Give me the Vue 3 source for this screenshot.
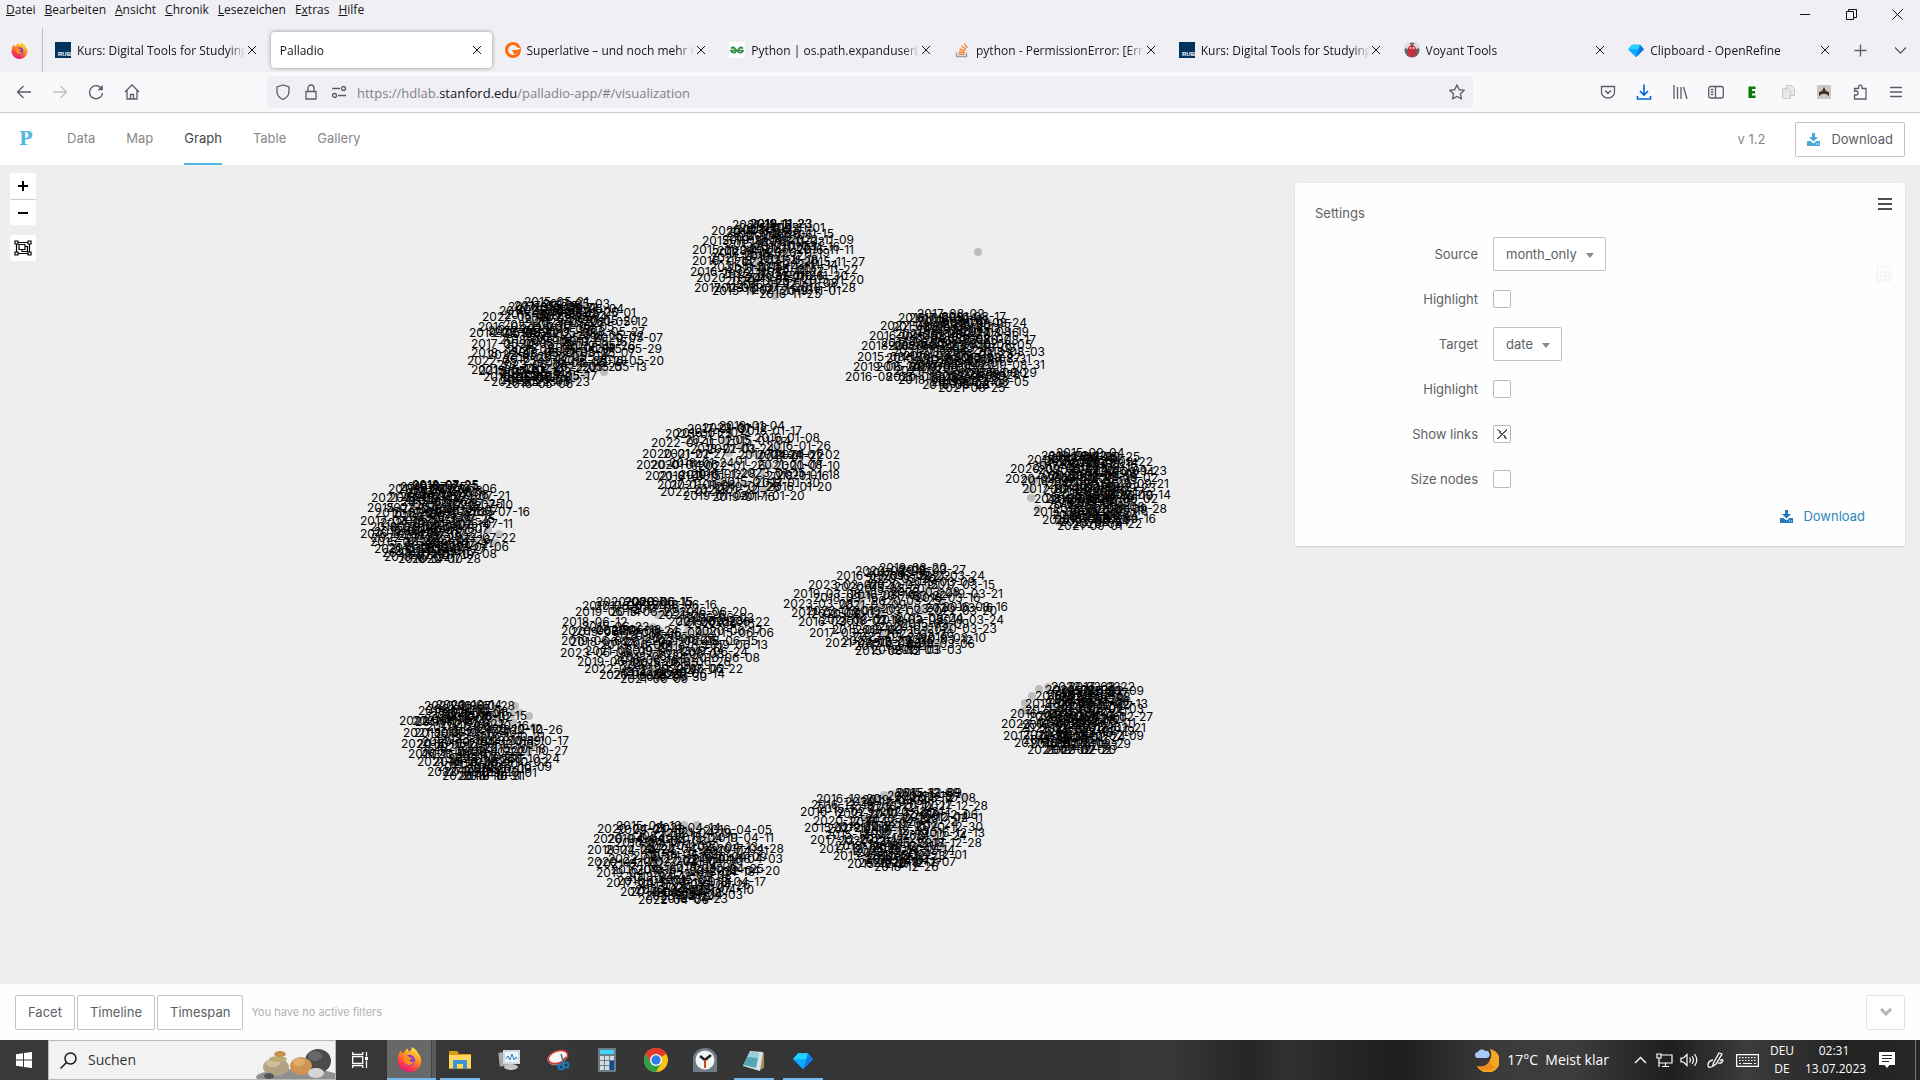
<script setup>
import { ref } from 'vue'

const menus = [
  ['', 'D', 'atei'], ['', 'B', 'earbeiten'], ['', 'A', 'nsicht'], ['', 'C', 'hronik'],
  ['', 'L', 'esezeichen'], ['E', 'x', 'tras'], ['', 'H', 'ilfe'],
]
const tabs = [
  { icon: 'rub', title: 'Kurs: Digital Tools for Studying Film' },
  { icon: '', title: 'Palladio', active: true },
  { icon: 'gg', title: 'Superlative – und noch mehr CSS-Tricks' },
  { icon: 'gfg', title: 'Python | os.path.expanduser() method' },
  { icon: 'so', title: 'python - PermissionError: [Errno 13]' },
  { icon: 'rub', title: 'Kurs: Digital Tools for Studying Film' },
  { icon: 'voyant', title: 'Voyant Tools' },
  { icon: 'gem', title: 'Clipboard - OpenRefine' },
]
const views = ['Data', 'Map', 'Graph', 'Table', 'Gallery']
const source = ref('month_only')
const target = ref('date')
const opts = ref({ hs: false, ht: false, links: true, size: false })

// Each month: labels anchored at their start (l) or end (r) as "x y day-label", and bare nodes (n).
const months = [
  { m: '05', k: 40,
    l: '524 302 2015-21|508 307 2017-03|499 311 2019-14|482 317 2022-18|478 327 2016-11|469 333 2019-26|493 333 2015-22|471 344 2017-09|471 353 2018-17|467 361 2022-25|471 370 2021-12|483 377 2016-02|491 382 2019-15|505 384 2016-06',
    r: '610 304 2017-03|624 309 2019-04|636 313 2022-01|648 322 2021-12|645 332 2018-27|663 338 2020-07|627 342 2019-16|662 349 2015-29|635 353 2018-07|664 361 2016-20|647 367 2015-13|597 376 2018-17|590 382 2022-23',
    n: '601 368|604 372|585 375' },
  { m: '07', k: 36,
    l: '400 487 2019-25|412 485 2018-25|388 489 2017-02|371 498 2021-09|367 508 2015-15|375 513 2016-28|360 521 2017-19|370 527 2018-04|360 534 2016-14|370 542 2015-24|374 549 2021-05|384 557 2018-22|398 559 2016-10',
    r: '479 486 2018-25|497 489 2017-06|510 496 2019-21|513 505 2020-10|530 512 2015-16|513 524 2016-11|489 529 2019-07|516 538 2022-22|509 547 2021-06|497 554 2017-08|481 559 2020-28',
    n: '481 492|486 498|491 506|488 530|499 534|496 543' },
  { m: '11', k: 28,
    l: '732 225 2021-12|750 224 2018-23|711 231 2020-05|702 241 2015-18|692 250 2015-04|712 253 2018-11|692 261 2016-13|710 267 2021-07|690 272 2016-02|696 278 2020-24|694 288 2017-08|712 291 2015-17|759 294 2016-25',
    r: '812 224 2019-23|825 228 2019-01|834 234 2020-15|854 240 2022-09|840 247 2021-16|854 250 2016-11|865 262 2015-27|858 270 2017-22|848 276 2018-30|864 280 2015-20|856 288 2018-28|841 291 2019-01',
    n: '775 296|757 256|806 266|752 281' },
  { m: '08', k: 36,
    l: '917 314 2017-02|898 318 2016-15|880 326 2022-11|869 336 2016-05|895 334 2021-28|861 346 2018-14|888 346 2018-22|857 357 2015-12|886 358 2016-18|853 367 2019-20|910 367 2019-13|935 376 2022-09|845 377 2016-03|922 385 2016-23|938 388 2021-25',
    r: '1006 317 2021-17|1027 323 2019-24|1029 332 2022-19|1036 340 2020-17|1032 345 2020-05|1045 352 2018-03|1031 359 2017-31|1045 365 2019-31|1037 373 2018-29|1029 382 2022-05',
    n: '918 376|932 376|931 384|915 357|928 361|913 366' },
  { m: '01', k: 8,
    l: '719 426 2019-04|702 428 2023-12|687 429 2017-07|665 434 2023-25|685 440 2021-05|651 443 2022-11|690 449 2018-03|642 454 2020-22|663 454 2021-27|738 455 2017-24|636 465 2020-14|650 465 2020-06|669 463 2018-24|757 465 2021-08|645 476 2021-23|658 476 2018-15|679 475 2019-12|740 473 2023-15|766 476 2018-16|657 485 2017-11|670 485 2021-08|660 492 2022-14|715 487 2019-28|683 496 2019-05|712 497 2019-16|740 496 2017-20',
    r: '802 431 2018-17|820 438 2016-08|831 446 2016-26|840 455 2021-02|824 455 2024-22|840 466 2020-10|840 475 2021-18|820 483 2021-30|832 487 2016-20',
    n: '729 453|741 446|745 484|752 453|715 484' },
  { m: '09', k: 36,
    l: '1056 453 2015-04|1041 456 2019-12|1027 460 2015-17|1010 469 2020-05|1005 479 2020-08|1035 475 2019-11|1022 489 2017-19|1034 499 2018-10|1045 499 2016-24|1033 512 2015-15|1042 520 2015-30|1057 526 2021-01',
    r: '1140 457 2018-25|1153 462 2021-22|1167 471 2016-23|1158 478 2017-02|1169 484 2019-21|1156 488 2020-23|1171 495 2022-14|1158 499 2019-02|1167 509 2018-28|1156 519 2017-16|1142 524 2020-22',
    n: '1031 498|1038 509|1043 464|1034 481|1030 489' },
  { m: '03', k: 24,
    l: '879 568 2019-20|855 571 2020-02|836 576 2016-09|808 585 2023-07|834 587 2020-13|793 594 2019-06|813 598 2018-16|880 596 2017-22|783 604 2023-08|791 613 2017-03|806 611 2023-01|881 609 2021-17|798 622 2016-01|820 620 2021-07|875 620 2018-05|809 633 2017-23|832 630 2015-18|825 643 2021-11|842 641 2022-29|855 651 2015-12|871 650 2018-03',
    r: '966 570 2018-27|985 576 2021-24|995 585 2017-15|1003 594 2019-21|1008 607 2016-16|997 611 2022-20|1004 620 2018-24|997 629 2020-23|986 638 2019-10|975 644 2018-06|962 650 2021-03',
    n: '864 596|860 603|859 612|880 607|895 617|912 594' },
  { m: '06', k: 24,
    l: '596 602 2020-07|625 602 2020-15|582 606 2017-03|575 612 2019-14|668 622 2021-02|562 622 2018-12|561 631 2020-10|571 632 2019-18|561 641 2019-02|570 642 2018-28|651 641 2021-25|560 653 2023-06|585 651 2021-09|577 662 2019-15|584 669 2022-21|599 675 2021-26|620 679 2021-09',
    r: '692 602 2020-15|717 605 2018-16|747 612 2016-20|770 622 2022-22|679 631 2019-24|762 631 2020-17|774 633 2015-06|758 641 2018-15|768 645 2019-13|748 652 2017-24|760 658 2016-08|731 662 2018-26|743 669 2017-22|725 674 2020-14|707 677 2016-30',
    n: '688 631|682 640|702 632|665 613|660 631|676 605' },
  { m: '10', k: 26,
    l: '424 706 2020-07|436 705 2020-14|418 711 2019-21|430 716 2018-18|399 721 2022-17|412 721 2021-07|403 733 2021-11|414 733 2018-19|401 744 2020-15|417 744 2015-12|408 754 2016-03|420 752 2019-08|417 762 2021-20|433 762 2016-05|427 772 2022-12|442 776 2020-18|459 776 2018-31',
    r: '515 706 2019-28|527 716 2018-15|529 726 2019-16|563 730 2022-26|569 741 2018-17|541 741 2018-19|568 751 2021-27|560 759 2020-24|552 767 2017-09|537 773 2019-01|525 776 2018-31',
    n: '529 716|515 706|520 713|534 727|536 738|513 722|532 746' },
  { m: '02', k: 30,
    l: '1051 687 2022-22|1045 690 2020-03|1035 696 2016-18|1025 704 2018-08|1010 714 2016-11|1028 717 2020-04|1001 724 2023-07|1020 728 2021-16|1003 736 2017-24|1014 743 2017-15|1027 750 2021-02|1044 750 2019-02',
    r: '1135 687 2017-22|1144 691 2015-09|1148 704 2020-13|1144 709 2018-03|1153 717 2019-27|1136 723 2016-01|1146 728 2018-21|1144 736 2022-09|1131 744 2020-29|1116 750 2023-20',
    n: '1039 689|1032 696|1025 703|1023 711|1048 687' },
  { m: '04', k: 26,
    l: '616 826 2015-13|597 829 2020-21|655 828 2021-14|593 839 2020-04|607 839 2019-19|587 850 2018-29|605 850 2022-24|587 862 2020-01|608 859 2022-27|675 861 2021-30|596 873 2019-06|611 870 2016-15|606 883 2017-11|617 881 2018-04|620 892 2017-12|630 892 2019-18|638 900 2022-06',
    r: '772 830 2016-05|774 838 2019-11|758 847 2020-13|784 849 2017-28|767 857 2015-09|783 859 2018-03|764 869 2020-25|780 871 2022-20|766 882 2018-17|754 890 2021-10|743 895 2019-03|728 899 2016-23',
    n: '684 825|697 825|717 838|655 852|660 862' },
  { m: '12', k: 28,
    l: '895 793 2015-09|816 799 2016-20|887 796 2020-15|811 805 2016-19|800 812 2016-02|836 814 2021-17|813 821 2020-14|804 828 2015-21|833 827 2019-12|825 835 2015-22|810 840 2017-23|819 849 2017-05|835 846 2018-16|833 856 2015-11|847 864 2015-27|858 863 2020-12|874 867 2018-26',
    r: '962 793 2015-09|976 798 2018-08|988 806 2021-28|978 815 2019-06|983 818 2017-11|983 827 2020-30|985 833 2016-13|982 843 2018-28|955 850 2021-14|967 855 2022-01|956 862 2019-07',
    n: '884 795|892 794|875 798|867 801|872 818|877 828' },
]

const labels = []
const nodes = [{ x: 978, y: 252 }]
let seed = 7
const rnd = () => (seed = (seed * 16807) % 2147483647) / 2147483647
const LABEL = 71

for (const { m, k, l, r, n } of months) {
  const read = (s) => s.split('|').map((row) => {
    const [x, y, t] = row.split(' ')
    return { x: +x, y: +y, t: t ? t.replace('-', `-${m}-`) : '' }
  })
  const left = read(l)
  const right = read(r)
  nodes.push(...read(n))
  left.forEach((p) => labels.push({ ...p, a: 'start' }))
  right.forEach((p) => labels.push({ ...p, a: 'end' }))
  const top = Math.min(...left.map((p) => p.y)) + 3
  const bottom = Math.max(...left.map((p) => p.y)) - 3
  const nearest = (list, y) => list.reduce((p, q) => (Math.abs(q.y - y) < Math.abs(p.y - y) ? q : p)).x
  for (let i = 0; i < k; i++) {
    // spread the inner labels evenly over the height, between the left and right edges
    const y = Math.round(top + ((bottom - top) * (i + 0.5)) / k)
    const x0 = nearest(left, y) + 6
    const x1 = nearest(right, y) - LABEL - 4
    const f = ((i * 0.618) % 1) * 0.8 + rnd() * 0.2
    const x = Math.round(x0 + (x1 - x0) * f)
    const day = String(1 + Math.floor(rnd() * 28)).padStart(2, '0')
    labels.push({ x, y, t: `${2015 + Math.floor(rnd() * 9)}-${m}-${day}`, a: 'start' })
    nodes.push({ x: x + (f < 0.5 ? LABEL : 0), y })
  }
}
labels.push({ x: 735, y: 461, t: '01', a: 'start' })
</script>

<template>
  <div class="screen">
    <header class="browser">
      <div class="titlebar">
        <nav class="menubar">
          <button v-for="m in menus" :key="m[2]" type="button">{{ m[0] }}<u>{{ m[1] }}</u>{{ m[2] }}</button>
        </nav>
        <div class="wincontrols">
          <button type="button" aria-label="Minimieren"><svg width="10" height="10"><path d="M0 5.5h10" stroke="#111" /></svg></button>
          <button type="button" aria-label="Verkleinern"><svg width="11" height="11" fill="none" stroke="#111"><path d="M.5 2.5h7v8h-7zM2.500 2.500v-2h8v8h-3" /></svg></button>
          <button type="button" aria-label="Schließen"><svg width="11" height="11" stroke="#111"><path d="M.5.5l10 10M10.500.5l-10 10" /></svg></button>
        </div>
      </div>

      <div class="tabstrip">
        <div class="pinned">
          <svg width="17" height="17" viewBox="0 0 32 32"><use href="#fox" /></svg>
        </div>
        <div v-for="(t, i) in tabs" :key="i" class="tab" :class="{ active: t.active }">
          <svg v-if="t.icon === 'rub'" class="fav" width="16" height="16"><rect width="16" height="16" fill="#00345f" /><text x="3" y="14" font-size="6" font-weight="700" fill="#fff" font-family="Liberation Sans, sans-serif">RUB</text></svg>
          <svg v-else-if="t.icon === 'gg'" class="fav" width="16" height="16"><circle cx="8" cy="8" r="6.500" fill="none" stroke="#ff6b0a" stroke-width="3" /><path d="M7 8h6a4 4 0 0 1-4 4" fill="#ff6b0a" /><path d="M10 6.500h5" stroke="#f0f0f4" stroke-width="1.500" /></svg>
          <svg v-else-if="t.icon === 'gfg'" class="fav" width="16" height="16" fill="none" stroke="#2f8d46" stroke-width="1.700"><rect width="16" height="16" fill="#fff" stroke="none" /><path d="M2 6.500q2-2 4 0t0 4q-2.500 1-4-2h12q-1.500 3-4 2t0-4q2-2 4 0" /></svg>
          <svg v-else-if="t.icon === 'so'" class="fav" width="16" height="16" fill="none"><path d="M2.500 10.500v4h10v-4" stroke="#9a9fa5" stroke-width="1.400" /><path d="M4.500 12.200h6M4.700 9.800l6 .8M5.500 7l5.600 2M7.500 4l4.500 3.500M10.500 1.500l2.700 4.500" stroke="#f48024" stroke-width="1.400" /></svg>
          <svg v-else-if="t.icon === 'voyant'" class="fav" width="16" height="16"><circle cx="8" cy="8" r="7.500" fill="#666" /><circle cx="4" cy="4" r="3" fill="#ddd" /><circle cx="12" cy="4" r="3" fill="#ddd" /><ellipse cx="8" cy="9" rx="4.500" ry="6" fill="#c62f42" /><path d="M6 6h1.500M9 6h1.500" stroke="#fff" stroke-width="1.500" /></svg>
          <svg v-else-if="t.icon === 'gem'" class="fav" width="16" height="16" viewBox="0 0 24 24"><use href="#gem" /></svg>
          <button type="button" class="title">{{ t.title }}</button>
          <button type="button" class="close" :aria-label="t.title + ' schließen'"><svg width="10" height="10" stroke="#15141a"><path d="M1 1l8 8M9 1l-8 8" /></svg></button>
        </div>
        <div class="tabtools">
          <button type="button" aria-label="Neuer Tab"><svg width="13" height="13" stroke="#5b5b66" stroke-width="1.300"><path d="M6.500.5v12M.5 6.500h12" /></svg></button>
          <button type="button" aria-label="Tabs auflisten"><svg width="13" height="9" fill="none" stroke="#5b5b66" stroke-width="1.300"><path d="M1 1.500l5.500 5.500 5.500-5.500" /></svg></button>
        </div>
      </div>

      <div class="toolbar">
        <div class="navbtns">
          <button type="button" aria-label="Zurück"><svg width="16" height="16" class="ic"><path d="M15 8H2M7.500 2L1.500 8l6 6" /></svg></button>
          <button type="button" aria-label="Vor"><svg width="16" height="16" class="ic dim"><path d="M1 8h13M8.500 2l6 6-6 6" /></svg></button>
          <button type="button" aria-label="Neu laden"><svg width="16" height="16" class="ic"><path d="M14 5.500A6.500 6.500 0 1 0 14.500 9" /><path d="M14.800 1v5.300H9.500z" fill="#5b5b66" stroke="none" /></svg></button>
          <button type="button" aria-label="Startseite"><svg width="16" height="16" class="ic"><path d="M1 8l7-7 7 7M3 6.500v8.500h10V6.500M6.500 15v-4.500h3V15" /></svg></button>
        </div>
        <div class="urlbar">
          <svg width="16" height="16" class="ic"><path d="M8 1L2 3v4q0 6 6 8.500 6-2.500 6-8.500V3z" /></svg>
          <svg width="16" height="16" class="ic"><path d="M3 7.500h10v7.500H3zM5 7.500V4a3 3 0 0 1 6 0v3.500" /></svg>
          <svg width="16" height="16" class="ic"><path d="M1 4.500h8M7 11.500h8" /><circle cx="12.500" cy="4.500" r="2" /><circle cx="3.500" cy="11.500" r="2" /></svg>
          <span class="url">https://hdlab.<b>stanford.edu</b>/palladio-app/#/visualization</span>
          <button type="button" aria-label="Lesezeichen setzen"><svg width="16" height="16" class="ic"><path d="M8 1l2.200 4.600 5 .7-3.700 3.500.9 5L8 12.400l-4.400 2.400.9-5L.8 6.300l5-.7z" /></svg></button>
        </div>
        <div class="addons">
          <button type="button" aria-label="Pocket"><svg width="16" height="16" class="ic"><path d="M1.500 2.500h13v5.500a6.500 6 0 0 1-13 0zM5 6.500l3 3 3-3" /></svg></button>
          <button type="button" aria-label="Downloads"><svg width="16" height="16" class="ic blue"><path d="M8 .5v10M4 7l4 4 4-4M1.500 12v3h13v-3" /></svg></button>
          <button type="button" aria-label="Bibliothek"><svg width="16" height="16" class="ic"><path d="M2 1v14M5.500 3v12M9 3v12M11.500 3l3.500 12" /></svg></button>
          <button type="button" aria-label="Sidebars"><svg width="16" height="16" class="ic"><rect x=".7" y="2.500" width="14.600" height="11.500" rx="2" /><path d="M7.500 2.500V14M2.800 5.500h2.500M2.800 8h2.500M2.800 10.500h2.500" /></svg></button>
          <button type="button" aria-label="Erweiterung E"><svg width="16" height="16"><rect x="3" y="1" width="10" height="14" rx="2" fill="#f2fbef" /><path d="M4.500 2.500h7V5H8v2h3v2.500H8v2h3.500V14h-7z" fill="#087a08" /></svg></button>
          <button type="button" aria-label="Kopieren"><svg width="16" height="16" fill="#e8e8e8" stroke="#c9c9c9"><path d="M6.500 1.500h5l3 3v7h-8z" /><path d="M2.500 4.500h5l3 3v7h-8z" /></svg></button>
          <button type="button" aria-label="Archiv"><svg width="16" height="16"><rect x="1" y="1" width="14" height="14" rx="1" fill="#d0c6bd" /><path d="M3 12V8l3-1 2-4 2 4 3 1v4l-3-2H6z" fill="#3a3634" /></svg></button>
          <button type="button" aria-label="Erweiterungen"><svg width="16" height="16" class="ic"><path d="M2.500 15V11h1.500a2 2 0 0 0 0-4H2.500V4.500h4V3a1.800 1.800 0 0 1 3.600 0v1.500H14V15z" /></svg></button>
          <button type="button" aria-label="Menü"><svg width="16" height="16" class="ic"><path d="M2 3.500h12M2 8h12M2 12.500h12" /></svg></button>
        </div>
      </div>
    </header>

    <div class="appbar">
      <a class="logo" href="#/">P</a>
      <nav>
        <a v-for="v in views" :key="v" href="#/visualization" :class="{ on: v === 'Graph' }">{{ v }}</a>
      </nav>
      <span class="version">v 1.2</span>
      <button type="button" class="btn dl">
        <svg width="13" height="13" viewBox="0 0 13 13" fill="#4aa8d8"><use href="#dl" /></svg>Download
      </button>
    </div>

    <main class="stage">
      <svg class="graph" width="100%" height="100%" role="img" aria-label="Graph">
        <g transform="translate(0 -165)">
          <circle v-for="(n, i) in nodes" :key="'n' + i" :cx="n.x" :cy="n.y" r="4" />
          <text v-for="(l, i) in labels" :key="'l' + i" :x="l.x" :y="l.y + 4" :text-anchor="l.a">{{ l.t }}</text>
        </g>
      </svg>

      <div class="zoomer">
        <div class="pair">
          <button type="button" aria-label="Vergrößern"><svg width="12" height="12" stroke="#000" stroke-width="2"><path d="M6 1v10M1 6h10" /></svg></button>
          <button type="button" aria-label="Verkleinern"><svg width="12" height="12" stroke="#000" stroke-width="2"><path d="M1 6h10" /></svg></button>
        </div>
        <button type="button" aria-label="Einpassen"><svg width="18" height="16" fill="none" stroke="#000" stroke-width="1.200"><path d="M2.500 2.500h13v11h-13z" /><path d="M5 4.500h6v5H5zM11 6.500h2.500v5H8v-2" /><path d="M1 1h3v3H1zM14 1h3v3h-3zM1 12h3v3H1zM14 12h3v3h-3z" fill="#fff" /></svg></button>
      </div>

      <section class="settings">
        <button type="button" class="burger" aria-label="Einstellungen"><svg width="14" height="12" stroke="#4b4f54" stroke-width="2"><path d="M0 1h14M0 6h14M0 11h14" /></svg></button>
        <svg class="ghost" width="15" height="16"><rect width="15" height="16" rx="1" fill="#f6f6f6" /><path d="M2 2h11v3H2zM2 7h2v2H2zM6 7h2v2H6zM10 7h3v2h-3zM2 11h2v2H2zM6 11h2v2H6zM10 11h3v2h-3z" fill="#fefefe" /></svg>
        <h2>Settings</h2>
        <div class="row"><label for="src">Source</label>
          <span class="sel"><select id="src" v-model="source"><option>month_only</option></select><svg width="8" height="5"><path d="M0 0h8L4 5z" fill="#8a8a8a" /></svg></span>
        </div>
        <div class="row"><label for="hs">Highlight</label><input id="hs" v-model="opts.hs" type="checkbox" /></div>
        <div class="row"><label for="tgt">Target</label>
          <span class="sel"><select id="tgt" v-model="target"><option>date</option></select><svg width="8" height="5"><path d="M0 0h8L4 5z" fill="#8a8a8a" /></svg></span>
        </div>
        <div class="row"><label for="ht">Highlight</label><input id="ht" v-model="opts.ht" type="checkbox" /></div>
        <div class="row"><label for="lk">Show links</label><input id="lk" v-model="opts.links" type="checkbox" /></div>
        <div class="row"><label for="sz">Size nodes</label><input id="sz" v-model="opts.size" type="checkbox" /></div>
        <a class="save" href="#/visualization"><svg width="13" height="13" viewBox="0 0 13 13" fill="#217ab7"><use href="#dl" /></svg>Download</a>
      </section>
    </main>

    <div class="filters">
      <button type="button" class="btn">Facet</button>
      <button type="button" class="btn">Timeline</button>
      <button type="button" class="btn">Timespan</button>
      <span>You have no active filters</span>
      <button type="button" class="btn fold" aria-label="Ausklappen"><svg width="12" height="8" fill="none" stroke="#b5b5b5" stroke-width="3"><path d="M1 1l5 5 5-5" /></svg></button>
    </div>

    <footer class="taskbar">
      <button type="button" class="start" aria-label="Start"><svg width="16" height="16" fill="#fff"><path d="M0 2.300L7 1.300v6.200H0zM8 1.100L16 0v7.500H8zM0 8.500h7v6.200l-7-1zM8 8.500h8V16l-8-1.100z" /></svg></button>
      <label class="search">
        <svg width="17" height="17" fill="none" stroke="#111" stroke-width="1.400"><circle cx="10.500" cy="6.500" r="5.500" /><path d="M6.500 10.500L.5 16.500" /></svg>
        <input type="text" placeholder="Suchen" aria-label="Suchen" />
        <svg class="stones" width="79" height="38">
          <ellipse cx="42" cy="36" rx="42" ry="8" fill="#8f8f8f" />
          <ellipse cx="62" cy="20" rx="13" ry="12" fill="#4b4b4b" /><ellipse cx="59" cy="15" rx="7" ry="5" fill="#686868" />
          <ellipse cx="20" cy="26" rx="13" ry="9" fill="#b3a284" /><ellipse cx="17" cy="22" rx="7" ry="4" fill="#cdbf9f" />
          <ellipse cx="22" cy="18" rx="9" ry="3" fill="#bcae70" /><ellipse cx="24" cy="13" rx="6" ry="3" fill="#c78f4c" />
          <ellipse cx="45" cy="25" rx="11" ry="9" fill="#cf9550" /><ellipse cx="43" cy="21" rx="6" ry="4" fill="#e0ad6d" />
          <ellipse cx="60" cy="32" rx="8" ry="5" fill="#d5d5d5" /><ellipse cx="13" cy="35" rx="5" ry="3" fill="#555" />
        </svg>
      </label>
      <button type="button" class="task" aria-label="Aktive Anwendungen"><svg width="17" height="16" fill="none" stroke="#fff" stroke-width="1.300"><path d="M.7 0v2.500h10V0M.7 16v-2.500h10V16M.7 4.700h10v6.600H.7zM14.500 0v4.500M14.500 8.500V16" /><path d="M13 5h3v3h-3z" fill="#fff" stroke="none" /></svg></button>
      <button type="button" class="task open focus" aria-label="Firefox"><svg width="25" height="25" viewBox="0 0 32 32"><use href="#fox" /></svg></button>
      <button type="button" class="task open" aria-label="Explorer"><svg width="24" height="20"><path d="M1 1h8l2 3h12v15H1z" fill="#d99a14" /><path d="M1 5h22v13H1z" fill="#ffd55e" /><path d="M5 19v-9h14v9h-4v-5H9v5z" fill="#3a94d6" /></svg></button>
      <button type="button" class="task" aria-label="Überwachung"><svg width="24" height="22"><path d="M2 3h12v14H2z" fill="#a6abae" transform="rotate(-6 8 10)" /><path d="M6 1h17v14H6z" fill="#d5d9db" /><path d="M8 3h13v10H8z" fill="#eef6fb" /><path d="M9 10l2-3 2 4 2-6 2 6 2-3 1 2" fill="none" stroke="#2683bd" /><ellipse cx="14" cy="18" rx="7" ry="3" fill="#c1c6c9" /></svg></button>
      <button type="button" class="task" aria-label="Snipping Tool"><svg width="24" height="23"><ellipse cx="11" cy="9" rx="10" ry="7" fill="#8e8e8e" transform="rotate(-18 11 9)" /><ellipse cx="12" cy="8" rx="10" ry="6" fill="#f6f6f6" stroke="#d33a36" stroke-width="1.500" transform="rotate(-18 12 8)" /><path d="M15 5l3 10M20 8l-6 7" stroke="#666" stroke-width="1.500" /><circle cx="15" cy="18" r="2.500" fill="none" stroke="#1a79bd" stroke-width="2" /><circle cx="20" cy="16" r="2.500" fill="none" stroke="#1a79bd" stroke-width="2" /></svg></button>
      <button type="button" class="task" aria-label="Rechner"><svg width="18" height="24"><rect width="18" height="24" rx="1" fill="#6d7d88" /><path d="M2 2h14v4H2z" fill="#40d5ff" /><path d="M2 8h4v4H2zM7 8h4v4H7zM12 8h4v4h-4zM2 13h4v4H2zM7 13h4v4H7zM2 18h4v4H2zM7 18h4v4H7z" fill="#d6dde2" /><path d="M12 13h4v9h-4z" fill="#0e4c91" /></svg></button>
      <button type="button" class="task" aria-label="Chrome"><svg width="24" height="24"><circle cx="12" cy="12" r="12" fill="#fbc116" /><path d="M12 12L1.600 6A12 12 0 0 1 22.400 6z" fill="#e33b2e" /><path d="M12 6h10.400A12 12 0 0 0 1.600 6l5.200 9z" fill="#e33b2e" /><path d="M1.600 6A12 12 0 0 0 12 24l5.200-9H6.800z" fill="#2c9f49" /><circle cx="12" cy="12" r="6" fill="#fff" /><circle cx="12" cy="12" r="4.700" fill="#2f7de9" /></svg></button>
      <button type="button" class="task" aria-label="Uhr"><svg width="24" height="24"><path d="M0 24V11a12 11 0 0 1 24 0v13z" fill="#6f7b87" /><circle cx="12" cy="12" r="9.500" fill="#f3f3f3" /><path d="M12 12L7 8M12 12l6-5" stroke="#222" stroke-width="2.500" /><path d="M12 12v8" stroke="#d1481b" stroke-width="2" /></svg></button>
      <button type="button" class="task open" aria-label="Editor"><svg width="24" height="23"><path d="M20 3l2 1v15l-4 2z" fill="#b08a4d" /><path d="M8 2l13 1-3 19L1 17z" fill="#d4e4e8" /><path d="M8 3l9 1-3 15L1 16z" fill="#53a5b7" /><path d="M8 3l9 1-1 5L5 8z" fill="#9bd0da" /></svg></button>
      <button type="button" class="task open" aria-label="OpenRefine"><svg width="20" height="20" viewBox="0 0 24 24"><use href="#gem" /></svg></button>

      <div class="tray">
        <svg class="moon" width="24" height="24"><path d="M15 1a12 12 0 1 1-13 17q8 2 12-4 4-6 1-13z" fill="#f5a623" /><path d="M2 18q8 2 12-4l6 5a12 12 0 0 1-18-1z" fill="#ef8a1d" /><path d="M3 10a3 3 0 0 1 0-6 4 4 0 0 1 7-1 3.500 3.500 0 0 1 2 7z" fill="#a9c8fb" /></svg>
        <span class="weather">17°C&nbsp; Meist klar</span>
        <svg class="up" width="13" height="8" fill="none" stroke="#fff" stroke-width="1.400"><path d="M1 7l5.500-5.500L12 7" /></svg>
        <svg class="net" width="17" height="15" fill="none" stroke="#fff" stroke-width="1.200"><path d="M5 2h11v8H3V6M9.500 10v3.500M6 13.500h7M1 1h4v4H1zM3 5v9" /></svg>
        <svg class="vol" width="18" height="14" fill="none" stroke="#fff" stroke-width="1.200"><path d="M1 5v4h2.500L7 12.500v-11L3.500 5zM9.500 4.500q2 2.500 0 5M12 3q3 4 0 8M14.500 1q4.500 6 0 12" /></svg>
        <svg class="pen" width="17" height="16" fill="none" stroke="#fff" stroke-width="1.300"><path d="M6 12L12 1l3 1-6 10-3 2zM6 8Q1 9 1 13t5 1M11 11q4 1 5-3-2-1-3 1" /></svg>
        <svg class="kbd" width="23" height="13" fill="none" stroke="#fff" stroke-width="1.200"><path d="M.6.6h21.800v11.800H.6z" /><path d="M3 3.700h17M3 6.500h17" stroke-dasharray="1.500 1.500" /><path d="M3 9.500h2M7 9.500h9M18 9.500h2" /></svg>
        <span class="lang">DEU<br />DE</span>
        <span class="clock">02:31<br />13.07.2023</span>
        <svg class="note" width="16" height="16"><path d="M0 0h16v13h-5.500L8 16l-2.500-3H0z" fill="#fff" /><path d="M3 3.500h10M3 6.500h10M3 9.500h7" stroke="#222" /></svg>
      </div>
    </footer>

    <svg class="defs" width="0" height="0" aria-hidden="true">
      <defs>
        <linearGradient id="flame" x1=".8" y1="0" x2=".3" y2="1"><stop offset="0" stop-color="#fff44f" /><stop offset=".4" stop-color="#ff9a1f" /><stop offset=".75" stop-color="#ff3b47" /><stop offset="1" stop-color="#e31587" /></linearGradient>
        <g id="fox"><path d="M19 0q6 3 8 8 4 4 4 10a15 14 0 0 1-30 0Q1 9 5 4l1 4 3-1q2-4 5-5l1 4q4-1 4-6z" fill="url(#flame)" /><circle cx="16" cy="17" r="7" fill="#7a3fe0" /><path d="M8 12q5-3 8 1 4 0 4 2-3 0-4 2 2 4 6 1-2 6-8 5-6-2-6-11z" fill="#ff8a1c" /></g>
        <g id="gem"><path d="M6 4h12l6 7-12 12L0 11z" fill="#10a8ff" /><path d="M6 4h12l-2 7H8L0 11z" fill="#23d3ff" /><path d="M18 4l6 7-12 12 4-12z" fill="#0a7be8" /></g>
        <g id="dl"><path d="M5 0h3v4h3L6.500 8.500 2 4h3zM0 8h3.500l3 2.500 3-2.500H13v5H0z" /><path d="M9 11h1M11 11h1" stroke="#fff" /></g>
      </defs>
    </svg>
  </div>
</template>

<style>
body { margin: 0; }
</style>

<style scoped>
.screen { min-height: 100vh; display: flex; flex-direction: column; font: 13px/20px Inter, "Liberation Sans", sans-serif; color: #555; background: #eee; overflow: hidden; }
* { box-sizing: border-box; }
svg { display: block; flex: none; }
button, select, input { font: inherit; color: inherit; margin: 0; }
button { background: none; border: 0; padding: 0; display: flex; align-items: center; justify-content: center; }
a { color: inherit; text-decoration: none; }
.defs { position: absolute; }

.browser { background: #f0f0f4; font: 12px/16px "Open Sans", "Noto Sans", sans-serif; color: #15141a; }
.titlebar { height: 28px; display: flex; justify-content: space-between; }
.menubar { display: flex; gap: 9px; padding: 2px 6px; align-items: flex-start; }
.menubar button { display: block; }
.wincontrols { display: flex; height: 28px; }
.wincontrols button { width: 46px; }
.tabstrip { height: 44px; display: flex; align-items: center; }
.pinned { width: 43px; height: 44px; border-right: 1px solid #bdbdc4; display: flex; align-items: center; padding-left: 11px; }
.tab { flex: 1; min-width: 0; height: 36px; margin: 0 1px 0 3px; padding: 0 9px; display: flex; align-items: center; border-radius: 4px; }
.tab.active { background: #fff; box-shadow: 0 0 4px rgba(0, 0, 0, .4); }
.fav { margin-right: 6px; }
.title { flex: 1; min-width: 0; display: block; padding-top: 2px; text-align: left; white-space: nowrap; overflow: hidden; mask-image: linear-gradient(to right, #000 calc(100% - 18px), transparent); }
.close { width: 12px; height: 20px; }
.tabtools { width: 79px; display: flex; }
.tabtools button { width: 40px; height: 32px; }
.toolbar { height: 41px; background: #f9f9fb; border-bottom: 1px solid #ccc; display: flex; align-items: center; padding-right: 6px; }
.navbtns { display: flex; padding-left: 6px; width: 267px; }
.navbtns button, .addons button { width: 36px; height: 32px; }
.ic { fill: none; stroke: #5b5b66; stroke-width: 1.3; }
.ic.dim { stroke: #bcbcc2; }
.ic.blue { stroke: #0061e0; stroke-width: 1.6; }
.urlbar { flex: 1; height: 32px; background: #f0f0f4; border-radius: 4px; display: flex; align-items: center; gap: 12px; padding: 0 8px; font-size: 13px; color: #808087; }
.url { flex: 1; margin-left: -2px; padding-top: 2px; }
.url b { font-weight: 400; color: #15141a; }
.addons { margin-left: 117px; display: flex; }

.appbar { height: 52px; background: #fff; display: flex; align-items: center; padding: 0 15px 0 19px; color: #888; }
.logo { width: 48px; font: bold 18px/20px "DejaVu Serif", serif; color: #4fb9e3; }
.appbar nav { display: flex; gap: 31px; height: 52px; }
.appbar nav a { display: flex; align-items: center; border-bottom: 2px solid transparent; }
.appbar nav .on { color: #444; border-bottom-color: #4fb9e3; }
.version { margin-left: auto; margin-right: 30px; }
.btn { height: 35px; padding: 0 12px; border: 1px solid #c3c3c3; border-radius: 2px; background: #fff; color: #5d6166; }
.dl { gap: 11px; padding: 0 11px; }

.stage { flex: 1; position: relative; display: flex; justify-content: space-between; align-items: flex-start; padding: 8px 15px 8px 10px; }
.graph { position: absolute; inset: 0; }
.graph text { font: 12px Inter, sans-serif; fill: #000; }
.graph circle { fill: #bdbdbd; }
.zoomer { position: relative; display: flex; flex-direction: column; gap: 10px; }
.zoomer button { width: 26px; height: 26px; background: #fff; border-radius: 2px; }
.pair button + button { border-top: 1px solid #ccc; }
.settings { position: relative; width: 610px; height: 363px; margin-top: 10px; background: #fefefe; border-radius: 2px; box-shadow: 0 1px 2px rgba(0, 0, 0, .15); padding: 20px; color: #5d6166; }
.settings h2 { font: inherit; margin: 0 0 8px; }
.burger { position: absolute; top: 15px; right: 13px; }
.ghost { position: absolute; top: 83px; right: 14px; }
.row { height: 45px; display: flex; align-items: center; gap: 15px; }
.row label { width: 163px; text-align: right; }
.sel { position: relative; }
.sel select { display: block; appearance: none; height: 34px; padding: 0 28px 0 12px; border: 1px solid #c3c3c3; border-radius: 2px; background: #fff; }
.sel svg { position: absolute; right: 12px; top: 16px; pointer-events: none; }
.row input { appearance: none; width: 18px; height: 18px; border: 1px solid #bbb; border-radius: 2px; background: #fff; }
.row input:checked { background: linear-gradient(45deg, transparent 45%, #555 45% 55%, transparent 55%) center / 10px 10px no-repeat, linear-gradient(-45deg, transparent 45%, #555 45% 55%, transparent 55%) center / 10px 10px no-repeat, #fff; }
.save { position: absolute; right: 40px; bottom: 20px; display: flex; align-items: center; gap: 10px; color: #2d86c0; }

.filters { height: 56px; background: #fefefe; display: flex; align-items: center; gap: 2px; padding: 0 15px; }
.filters span { margin-left: 6px; font-size: 11px; color: #b0b0b0; }
.filters .fold { margin-left: auto; width: 39px; border-color: #e3e3e3; }

.taskbar { height: 40px; display: flex; color: #fff; font: 12px/18px "Open Sans", "Noto Sans", sans-serif; background: linear-gradient(to right, #393939 0%, #343434 55%, #383838 61%, #252525 65%, #303030 67%, #1d1d1d 73%, #3b3b3b 78%, #3d3d3d 82%, #1f1f1f 87%, #3c3c3c 91%, #222 96%, #262626 100%); }
.start { width: 48px; }
.search { width: 288px; background: #f2f2f2; border: 1px solid #b9b9b9; display: flex; align-items: center; padding-left: 11px; }
.search input { flex: 1; min-width: 0; border: 0; background: none; margin-left: 11px; padding: 0; font-size: 14px; }
.search input::placeholder { color: #333; opacity: 1; }
.task { width: 40px; margin-left: 9px; border-bottom: 2px solid transparent; border-top: 2px solid transparent; }
.search + .task { margin: 0 2px 0 4px; }
.open { border-bottom-color: #76b9ed; }
.focus { width: 49px; margin-left: 5px; margin-right: -5px; background: linear-gradient(to right, #686868 44px, #444 44px 45px, #5a5a5a 45px); background-clip: padding-box; border-top: 0; padding-right: 4px; }
.tray { margin-left: auto; display: flex; align-items: center; padding-right: 20px; margin-right: 4px; border-right: 1px solid #777; }
.weather { font-size: 14px; margin: 0 25px 0 8px; }
.up { margin-right: 9px; }
.net { margin-right: 7px; }
.vol { margin-right: 9px; }
.pen { margin-right: 12px; }
.lang { width: 46px; text-align: center; }
.clock { width: 58px; margin-right: 16px; text-align: center; white-space: nowrap; }
</style>
